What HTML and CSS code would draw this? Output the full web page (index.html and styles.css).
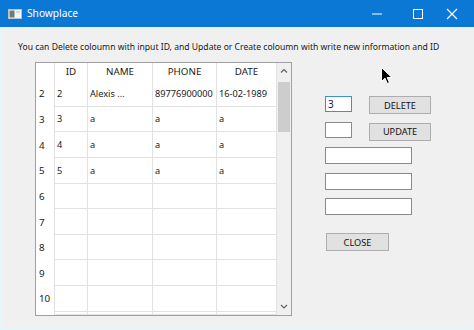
FILE: index.html
```html
<!DOCTYPE html>
<html lang="en">
<head>
	<meta charset="utf-8">
	<meta name="viewport" content="width=device-width, initial-scale=1">
	<title>Showplace</title>
	<link rel="stylesheet" href="styles.css">
</head>
<body>
	<div class="window">
		<header class="titlebar">
			<svg class="app-icon" width="14" height="10" viewBox="0 0 14 10">
				<rect x="0.5" y="0.5" width="13" height="9" fill="#f4f4f4" stroke="#b9c3c9"/>
				<rect x="1.5" y="1.5" width="5" height="7" fill="#6e7d74"/>
				<rect x="8" y="2" width="4" height="2" fill="#d2d8dc"/>
			</svg>
			<span class="title">Showplace</span>
			<div class="controls">
				<svg width="46" height="27" viewBox="0 0 46 27"><rect x="18" y="13.5" width="10" height="1" fill="#fff"/></svg>
				<svg width="36" height="27" viewBox="0 0 36 27"><rect x="13.5" y="9.5" width="9" height="9" fill="none" stroke="#fff"/></svg>
				<svg width="38" height="27" viewBox="0 0 38 27"><path d="M11 9 L21 19 M21 9 L11 19" stroke="#fff" stroke-width="1.2"/></svg>
			</div>
		</header>

		<div class="client">
			<p class="hint">You can Delete coloumn with input ID, and Update or Create coloumn with write new information and ID</p>

			<div class="main">
				<div class="table">
					<div class="grid">
						<div class="rh"></div><div class="hd">ID</div><div class="hd">NAME</div><div class="hd">PHONE</div><div class="hd">DATE</div>
						<div class="rh">2</div><div class="td">2</div><div class="td">Alexis ...</div><div class="td">89776900000</div><div class="td">16-02-1989</div>
						<div class="rh">3</div><div class="td">3</div><div class="td">a</div><div class="td">a</div><div class="td">a</div>
						<div class="rh">4</div><div class="td">4</div><div class="td">a</div><div class="td">a</div><div class="td">a</div>
						<div class="rh">5</div><div class="td">5</div><div class="td">a</div><div class="td">a</div><div class="td">a</div>
						<div class="rh">6</div><div class="td"></div><div class="td"></div><div class="td"></div><div class="td"></div>
						<div class="rh">7</div><div class="td"></div><div class="td"></div><div class="td"></div><div class="td"></div>
						<div class="rh">8</div><div class="td"></div><div class="td"></div><div class="td"></div><div class="td"></div>
						<div class="rh">9</div><div class="td"></div><div class="td"></div><div class="td"></div><div class="td"></div>
						<div class="rh">10</div><div class="td"></div><div class="td"></div><div class="td"></div><div class="td"></div>
						<div class="rh"></div><div class="td"></div><div class="td"></div><div class="td"></div><div class="td"></div>
					</div>
					<div class="scrollbar">
						<svg class="arrow" width="14" height="17" viewBox="0 0 14 17"><path d="M4 9.5 L7 6.5 L10 9.5" fill="none" stroke="#606060" stroke-width="1.2"/></svg>
						<div class="thumb"></div>
						<div class="track"></div>
						<svg class="arrow" width="14" height="17" viewBox="0 0 14 17"><path d="M4 7 L7 10 L10 7" fill="none" stroke="#606060" stroke-width="1.2"/></svg>
					</div>
				</div>

				<div class="panel">
					<div class="row">
						<div class="field small focused">3</div>
						<button class="btn">DELETE</button>
					</div>
					<div class="row second">
						<div class="field small"></div>
						<button class="btn">UPDATE</button>
					</div>
					<div class="row"><div class="field wide"></div></div>
					<div class="row"><div class="field wide"></div></div>
					<div class="row"><div class="field wide"></div></div>
					<button class="btn close">CLOSE</button>
				</div>
			</div>
		</div>
	</div>

	<svg class="cursor" width="12" height="18" viewBox="0 0 12 18">
		<path d="M0.5 0.5 L0.5 14.5 L4 11.2 L6.3 16.5 L8.4 15.6 L6.2 10.5 L10.8 10.5 Z" fill="#000" stroke="#fff" stroke-width="1"/>
	</svg>
</body>
</html>
```

FILE: styles.css
```css
*{
	margin: 0px;
	box-sizing: border-box;
}
body{
	width: 474px;
	height: 330px;
	overflow: hidden;
	background-color: #e3f6fb;
	font-family: "Noto Sans", "Open Sans", sans-serif;
	color: #1a1a1a;
	position: relative;
}
.window{
	display: flex;
	flex-direction: column;
	height: 327px;
}
.titlebar{
	height: 27px;
	background-color: #0a78d4;
	color: #fff;
	display: flex;
	align-items: center;
	padding-left: 8px;
}
.app-icon{
	margin-top: 1px;
}
.title{
	font-size: 10.2px;
	margin-left: 5px;
	margin-top: -1px;
}
.controls{
	margin-left: auto;
	display: flex;
}
.controls svg{
	display: block;
}
.client{
	flex: 1;
	background-color: #f0f0f0;
	margin-left: 2px;
}
.hint{
	font-size: 8.6px;
	line-height: 13px;
	padding: 14px 0 0 16px;
	white-space: nowrap;
}
.main{
	display: flex;
	margin: 8px 0 0 33px;
}

/* table */
.table{
	display: flex;
	width: 257px;
	height: 254px;
	border: 1px solid #a0a0a0;
	background-color: #fff;
	overflow: hidden;
}
.grid{
	display: grid;
	grid-template-columns: 19px 33px 65px 64px 60px;
	grid-template-rows: 18px repeat(9, 25.65px) 1fr;
	font-size: 9.2px;
}
.rh{
	border-right: 1px solid #e2e2e2;
	padding-left: 3px;
	display: flex;
	align-items: center;
	font-size: 9.8px;
}
.hd{
	border-right: 1px solid #e2e2e2;
	display: flex;
	align-items: center;
	justify-content: center;
	font-size: 9.8px;
	padding-bottom: 1px;
}
.td{
	border-right: 1px solid #e2e2e2;
	border-bottom: 1px solid #e2e2e2;
	padding-left: 2px;
	display: flex;
	align-items: center;
	white-space: nowrap;
}
.scrollbar{
	width: 14px;
	display: flex;
	flex-direction: column;
	background-color: #f0f0f0;
}
.arrow{
	display: block;
}
.thumb{
	height: 50px;
	margin: 2px 1px 0 1px;
	background-color: #cdcdcd;
}
.track{
	flex: 1;
}

/* right side */
.panel{
	margin-left: 33px;
	padding-top: 34px;
	display: flex;
	flex-direction: column;
}
.row{
	height: 25.5px;
	display: flex;
	align-items: flex-start;
	gap: 17px;
}
.row.second .btn{
	margin-top: 1px;
}
.field{
	height: 17px;
	background-color: #fff;
	border: 1px solid #8a8a8a;
	font-size: 10px;
	line-height: 15px;
	padding-left: 2px;
}
.small{
	width: 27px;
	height: 16px;
	line-height: 14px;
}
.focused{
	border-color: #3d8fd8;
}
.wide{
	width: 87px;
}
.btn{
	width: 62px;
	height: 18px;
	background-color: #e1e1e1;
	border: 1px solid #adadad;
	font-family: "Noto Sans", "Open Sans", sans-serif;
	font-size: 9.2px;
	color: #111;
	padding: 0;
}
.close{
	width: 63px;
	margin: 9.5px 0 0 1px;
}
.cursor{
	position: absolute;
	left: 381px;
	top: 67px;
}
```
